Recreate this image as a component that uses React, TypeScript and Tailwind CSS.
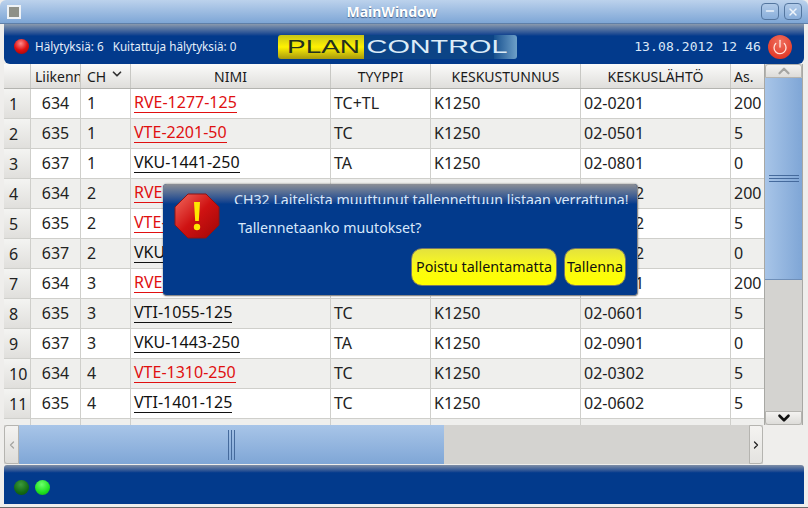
import { ChevronDown, ChevronLeft, ChevronRight, ChevronUp, Minus, Power, X } from "lucide-react";

const rows = [
  { id: 1, line: 634, ch: 1, name: "RVE-1277-125", alert: true, type: "TC+TL", code: "02-0201", as: 200 },
  { id: 2, line: 635, ch: 1, name: "VTE-2201-50", alert: true, type: "TC", code: "02-0501", as: 5 },
  { id: 3, line: 637, ch: 1, name: "VKU-1441-250", alert: false, type: "TA", code: "02-0801", as: 0 },
  { id: 4, line: 634, ch: 2, name: "RVE-1278-125", alert: true, type: "TC+TL", code: "02-0202", as: 200 },
  { id: 5, line: 635, ch: 2, name: "VTE-2202-50", alert: true, type: "TC", code: "02-0502", as: 5 },
  { id: 6, line: 637, ch: 2, name: "VKU-1442-250", alert: false, type: "TA", code: "02-0802", as: 0 },
  { id: 7, line: 634, ch: 3, name: "RVE-1279-125", alert: true, type: "TC+TL", code: "02-0301", as: 200 },
  { id: 8, line: 635, ch: 3, name: "VTI-1055-125", alert: false, type: "TC", code: "02-0601", as: 5 },
  { id: 9, line: 637, ch: 3, name: "VKU-1443-250", alert: false, type: "TA", code: "02-0901", as: 0 },
  { id: 10, line: 634, ch: 4, name: "VTE-1310-250", alert: true, type: "TC", code: "02-0302", as: 5 },
  { id: 11, line: 635, ch: 4, name: "VTI-1401-125", alert: false, type: "TC", code: "02-0602", as: 5 },
];

const headCell =
  "flex items-center justify-center border-r border-[#c8c8c4] bg-gradient-to-b from-[#fbfbfa] to-[#dfdedb] text-[14px] text-[#1a1a1a]";
const cell = "flex items-center border-r border-[#cfcfcb] pb-px text-[16px] text-[#222]";

function Led({ className }: { className: string }) {
  return <span className={`block size-[15px] rounded-full ${className}`} />;
}

function TableHeader() {
  return (
    <div className="flex h-[25px] shrink-0 border-b border-[#b4b4b0]">
      <div className={`${headCell} w-[27px]`} />
      <div className={`${headCell} w-[50px] overflow-hidden !justify-start pl-[4px]`}>Liikenne</div>
      <div className={`${headCell} w-[50px] !justify-start gap-[4px] pl-[6px]`}>
        CH
        <ChevronDown className="mb-1 size-[14px] text-[#333]" strokeWidth={3} />
      </div>
      <div className={`${headCell} w-[200px]`}>NIMI</div>
      <div className={`${headCell} w-[100px]`}>TYYPPI</div>
      <div className={`${headCell} w-[150px]`}>KESKUSTUNNUS</div>
      <div className={`${headCell} w-[150px]`}>KESKUSLÄHTÖ</div>
      <div className={`${headCell} w-[33px] !justify-start border-r-0 pl-[3px]`}>As.</div>
    </div>
  );
}

function TableRow({ row }: { row: (typeof rows)[number] }) {
  const even = row.id % 2 === 0;
  return (
    <div className={`flex h-[30px] shrink-0 border-b border-[#cfcfcb] ${even ? "bg-[#efefed]" : "bg-white"}`}>
      <div className="flex w-[27px] items-center border-r border-[#cfcfcb] bg-gradient-to-b from-[#f4f4f2] to-[#e0dfdc] pl-[5px] text-[16px] text-[#222]">
        {row.id}
      </div>
      <div className={`${cell} w-[50px] justify-center`}>{row.line}</div>
      <div className={`${cell} w-[50px] pl-[6px]`}>{row.ch}</div>
      <div className={`${cell} w-[200px] pl-[3px]`}>
        <span className={`border-b-[1.5px] leading-[19px] ${row.alert ? "border-[#e01010] text-[#e01010]" : "border-[#111] text-[#111]"}`}>
          {row.name}
        </span>
      </div>
      <div className={`${cell} w-[100px] pl-[3px]`}>{row.type}</div>
      <div className={`${cell} w-[150px] pl-[3px]`}>K1250</div>
      <div className={`${cell} w-[150px] pl-[3px]`}>{row.code}</div>
      <div className={`${cell} w-[33px] border-r-0 pl-[3px]`}>{row.as}</div>
    </div>
  );
}

function Logo() {
  return (
    <div className="flex h-[24px] w-[239px] overflow-hidden rounded-[3px] font-['Liberation_Sans',sans-serif] text-[18px] leading-[24px]">
      <div className="flex w-[86px] items-center justify-center bg-gradient-to-b from-[#c8c414] via-[#fff200] to-[#a89a0c] pl-[4px] text-[#23301e]">
        <span className="inline-block scale-x-[1.55]">PLAN</span>
      </div>
      <div className="flex flex-1 items-center justify-center bg-gradient-to-r from-[#0c4486] from-85% via-[#15518f] to-[#6ea0c8] pr-[8px] text-[#dcecf8]">
        <span className="inline-block scale-x-[1.6]">CONTROL</span>
      </div>
    </div>
  );
}

function WarningIcon() {
  return (
    <svg viewBox="0 0 46 46" className="size-[46px] shrink-0">
      <defs>
        <linearGradient id="stop" x1="0" y1="0" x2="1" y2="1">
          <stop offset="0" stopColor="#f26a5e" />
          <stop offset="0.5" stopColor="#cf1212" />
          <stop offset="1" stopColor="#a00606" />
        </linearGradient>
      </defs>
      <polygon points="14,1 32,1 45,14 45,32 32,45 14,45 1,32 1,14" fill="url(#stop)" stroke="#8c1414" />
      <path d="M20 9h6l-1.2 19h-3.6z" fill="#ffe600" />
      <circle cx="23" cy="34" r="3.2" fill="#ffe600" />
    </svg>
  );
}

function YellowButton({ label, className }: { label: string; className: string }) {
  return (
    <div
      className={`flex h-[38px] items-center justify-center rounded-[11px] border border-[#77776a] bg-gradient-to-b from-[#e4e23c] via-[#fbfb10] to-[#ffff00] text-[14.3px] text-[#111] ${className}`}
    >
      {label}
    </div>
  );
}

function Dialog() {
  return (
    <div className="absolute left-[163px] top-[184px] h-[112px] w-[475px] overflow-hidden rounded-[4px] border-r border-b border-[#8a8a8a] bg-[#023a8c] shadow-[0_0_2px_rgba(0,0,0,0.5)]">
      <div className="h-[20px] bg-gradient-to-b from-[#8d8f95] to-[#023a8c]" />
      <div className="absolute left-[11px] top-[9px]">
        <WarningIcon />
      </div>
      {/* the label is clipped at its lower edge in the original */}
      <div className="absolute left-[71px] top-[6px] h-[14px] overflow-hidden whitespace-nowrap text-[14.2px] leading-[20px] text-[#d8e8fb]">
        CH32 Laitelista muuttunut tallennettuun listaan verrattuna!
      </div>
      <div className="absolute left-[75px] top-[34px] whitespace-nowrap text-[14.2px] leading-[20px] text-[#d8e8fb]">
        Tallennetaanko muutokset?
      </div>
      <div className="absolute left-[248px] top-[64px] flex gap-[7px]">
        <YellowButton label="Poistu tallentamatta" className="w-[146px]" />
        <YellowButton label="Tallenna" className="w-[62px]" />
      </div>
    </div>
  );
}

export default function App() {
  return (
    <div className="relative flex h-[508px] w-[808px] flex-col overflow-hidden border-b border-[#6b6b6b] bg-[#efeeec] font-['Noto_Sans',sans-serif]">
      {/* title bar */}
      <div className="relative flex h-[24px] shrink-0 items-center justify-between rounded-t-[6px] border-b border-[#5f7fa8] bg-gradient-to-b from-[#bcd2ec] to-[#7ea6d6] pl-[7px] pr-[6px]">
        <div className="size-[14px] border-2 border-[#eef2f6] bg-[#8e9088]" />
        <span className="absolute left-0 right-[24px] text-center text-[14px] font-bold text-white [text-shadow:0_1px_1px_#44618a]">
          MainWindow
        </span>
        <div className="flex gap-[5px]">
          <div className="flex h-[17px] w-[18px] items-end justify-center rounded-[4px] border border-[#54769f] pb-[2px] text-[#eef4fb]">
            <Minus className="size-3" strokeWidth={3} />
          </div>
          <div className="flex h-[17px] w-[18px] items-center justify-center rounded-[4px] border border-[#54769f] text-[#eef4fb]">
            <X className="size-3" strokeWidth={3} />
          </div>
        </div>
      </div>

      <div className="flex flex-1 flex-col pb-[3px] pl-[4px] pr-[4px]">
        <div className="flex flex-1 flex-col bg-[#efeeec]">
          {/* status header */}
          <div className="flex h-[40px] shrink-0 items-center rounded-b-[6px] bg-gradient-to-b from-[#8a99ad] via-[#023a8c] via-30% to-[#023a8c] pl-[10px] pr-[12px] pt-[5px]">
            <Led className="bg-[radial-gradient(circle_at_45%_30%,#ff8a8a,#e01010_50%,#8a0505)]" />
            <span className="ml-[6px] text-[11.7px] text-[#e4eefa]">Hälytyksiä: 6</span>
            <span className="ml-[9px] text-[11.7px] text-[#e4eefa]">Kuitattuja hälytyksiä: 0</span>
            <div className="ml-[42px]">
              <Logo />
            </div>
            <span className="ml-auto mr-[7px] font-['DejaVu_Sans_Mono',monospace] text-[13px] tracking-[0.1px] text-[#dbe8f8]">
              13.08.2012 12 46
            </span>
            <div className="flex size-[24px] items-center justify-center rounded-full bg-[radial-gradient(circle_at_50%_30%,#f0705e,#dd2a18)] text-[#ffe0d8]">
              <Power className="size-4" strokeWidth={2} />
            </div>
          </div>

          <div className="flex h-[361px] shrink-0">
            {/* table */}
            <div className="flex w-[761px] flex-col overflow-hidden border-r border-[#a8a8a4] bg-white">
              <TableHeader />
              {rows.map((row) => (
                <TableRow key={row.id} row={row} />
              ))}
              <div className="flex flex-1 bg-[#efefed]">
                <div className="w-[27px] border-r border-[#cfcfcb]" />
                <div className="w-[50px] border-r border-[#cfcfcb]" />
                <div className="w-[50px] border-r border-[#cfcfcb]" />
                <div className="w-[200px] border-r border-[#cfcfcb]" />
                <div className="w-[100px] border-r border-[#cfcfcb]" />
                <div className="w-[150px] border-r border-[#cfcfcb]" />
                <div className="w-[150px] border-r border-[#cfcfcb]" />
              </div>
            </div>

            {/* vertical scrollbar */}
            <div className="flex w-[38px] flex-col border-r border-[#a8a8a4] bg-[#d4d3d0]">
              <div className="flex h-[14px] shrink-0 items-center justify-center rounded-t-[3px] border border-[#b5b4b0] bg-gradient-to-b from-[#f4f3f1] to-[#dddcd9] text-[#a5a5a2]">
                <ChevronUp className="size-[18px]" strokeWidth={3} />
              </div>
              <div className="flex h-[202px] shrink-0 flex-col items-center justify-center gap-[2px] border-b border-[#6f8fb8] bg-gradient-to-r from-[#a8c5e8] to-[#7fa6d6]">
                <div className="h-px w-[30px] bg-[#456a9c]" />
                <div className="h-px w-[30px] bg-[#456a9c]" />
                <div className="h-px w-[30px] bg-[#456a9c]" />
              </div>
              <div className="flex-1" />
              <div className="flex h-[14px] shrink-0 items-center justify-center rounded-b-[3px] border border-[#b5b4b0] bg-gradient-to-b from-[#f4f3f1] to-[#dddcd9] text-[#111]">
                <ChevronDown className="size-[18px]" strokeWidth={3.5} />
              </div>
            </div>
          </div>

          {/* horizontal scrollbar */}
          <div className="flex h-[39px] w-[759px] shrink-0 bg-[#d4d3d0]">
            <div className="flex w-[15px] items-center justify-center rounded-l-[3px] border border-[#b5b4b0] bg-gradient-to-b from-[#f4f3f1] to-[#dddcd9] text-[#a5a5a2]">
              <ChevronLeft className="size-3" strokeWidth={2.5} />
            </div>
            <div className="flex w-[425px] items-center justify-end bg-gradient-to-b from-[#a8c5e8] to-[#7fa6d6] pr-[209px]">
              <div className="flex h-[30px] gap-[2px]">
                <div className="w-px bg-[#456a9c]" />
                <div className="w-px bg-[#456a9c]" />
                <div className="w-px bg-[#456a9c]" />
              </div>
            </div>
            <div className="flex-1" />
            <div className="flex w-[14px] items-center justify-center rounded-r-[3px] border border-[#b5b4b0] bg-gradient-to-b from-[#f4f3f1] to-[#e4e3e0] text-[#222]">
              <ChevronRight className="size-3" strokeWidth={2.5} />
            </div>
          </div>

          {/* bottom bar */}
          <div className="mt-px flex flex-1 items-center gap-[6px] rounded-t-[3px] bg-gradient-to-b from-[#7f8ea6] via-[#023a8c] via-20% to-[#023a8c] pl-[10px] pt-[5px]">
            <Led className="bg-[radial-gradient(circle_at_45%_30%,#3d9a3d,#136a13_60%,#0d4a0d)]" />
            <Led className="bg-[radial-gradient(circle_at_45%_30%,#6cff6c,#1ee01e_60%,#12a012)]" />
          </div>
        </div>
      </div>

      <Dialog />
    </div>
  );
}
